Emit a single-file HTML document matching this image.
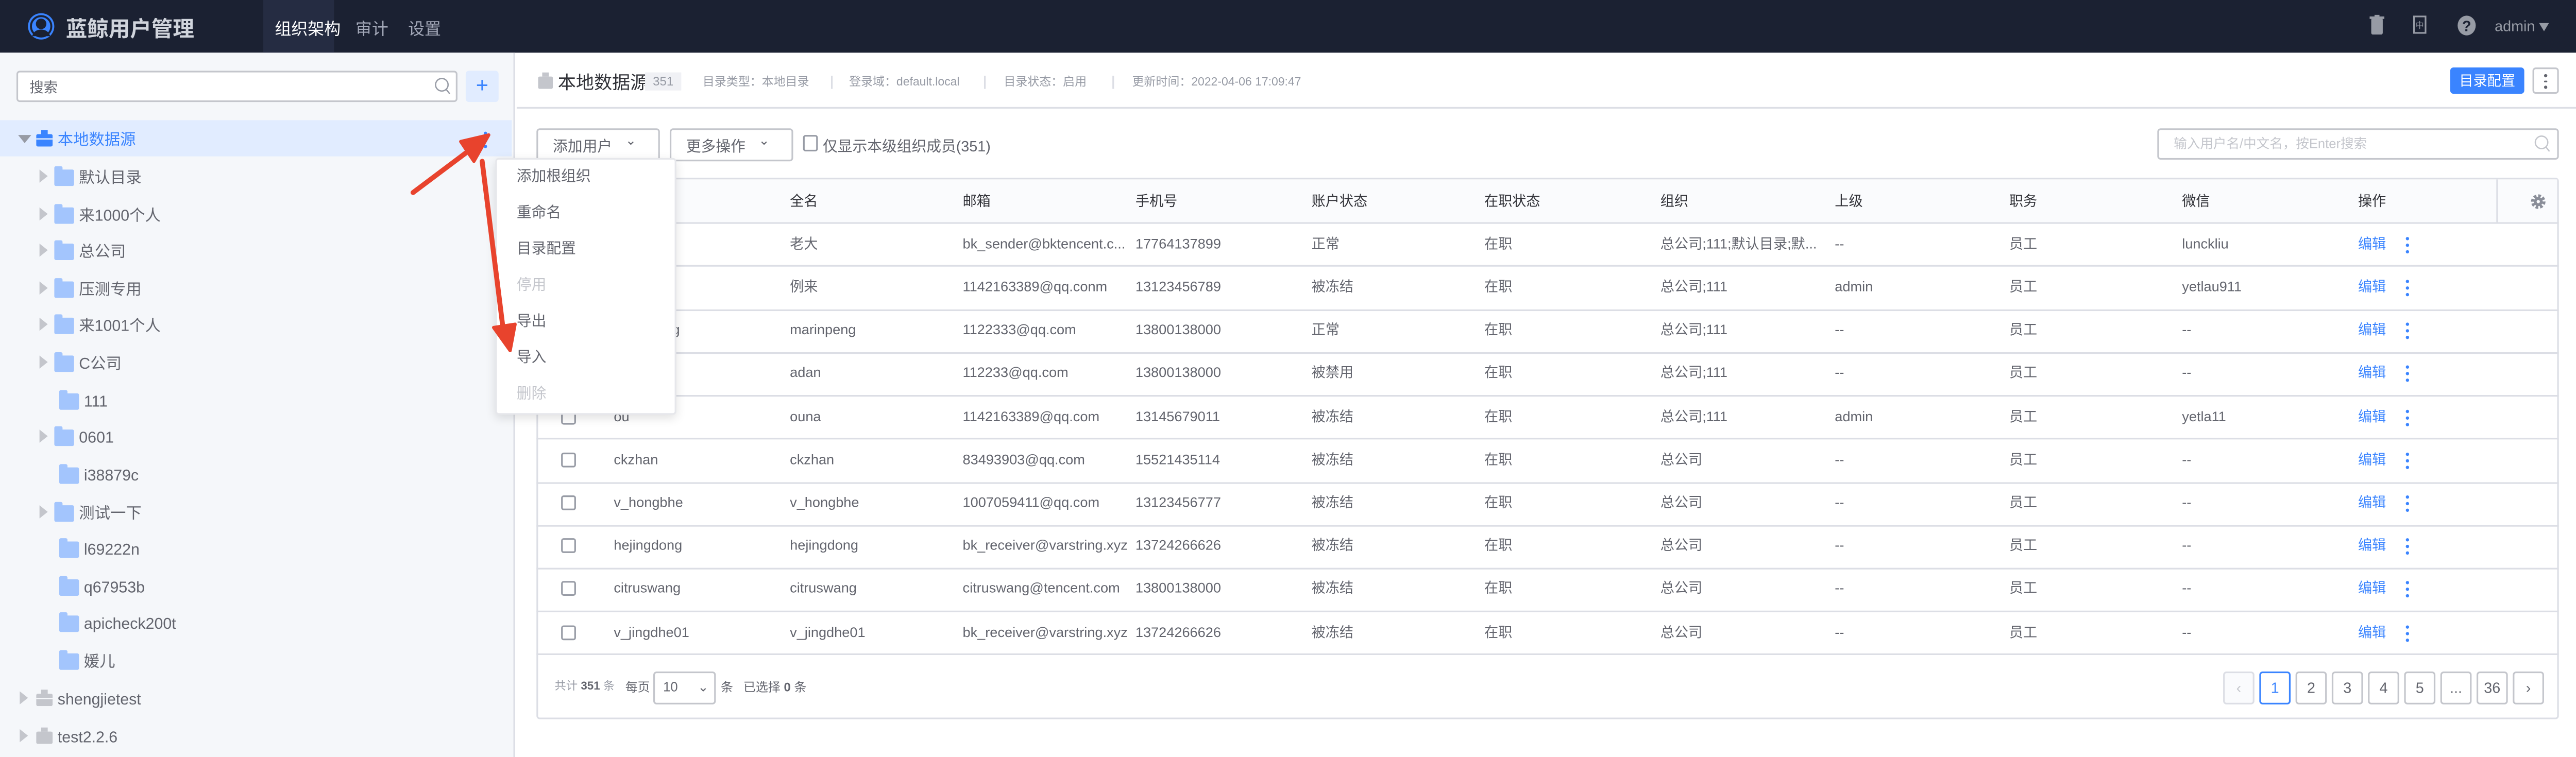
<!DOCTYPE html>
<html><head><meta charset="utf-8">
<style>
*{margin:0;padding:0;box-sizing:border-box}
html,body{width:5118px;height:1470px;overflow:hidden;background:#fff}
#s{position:absolute;left:0;top:0;width:1600px;height:460px;transform:scale(3.194,3.196);transform-origin:0 0;font-family:"Liberation Sans","Noto Sans CJK SC",sans-serif;color:#63656e;font-size:9px;background:#fff}
.a{position:absolute;white-space:nowrap}
.hd{left:0;top:0;width:1600px;height:32px;background:#1b2132}
.sb{left:0;top:32px;width:313px;height:428px;background:#f5f7fa;border-right:1px solid #dcdee5}
.tr{position:absolute;width:0;height:0;border-top:4px solid transparent;border-bottom:4px solid transparent;border-left:5px solid #c4c6cc}
.fd{position:absolute;width:12px;height:10px;background:#a3c5fd;border-radius:1px}
.fd:before{content:"";position:absolute;left:0;top:-2px;width:5px;height:3px;background:#a3c5fd;border-radius:1px 1px 0 0}
.tn{font-size:9.5px;color:#63656e;line-height:18px}
.mi{left:314px;font-size:9px;color:#63656e;line-height:13px}
.th{font-size:8.5px;color:#313238;line-height:12px}
.td{font-size:8.5px;color:#63656e;line-height:12px}
.ln{position:absolute;left:326px;width:1229px;height:1px;background:#dcdee5}
.cb{position:absolute;left:341px;width:9px;height:9px;border:1px solid #979ba5;border-radius:1.5px;background:#fff}
.pg{position:absolute;top:408px;width:19px;height:20px;border:1px solid #c4c6cc;border-radius:2px;text-align:center;line-height:18px;font-size:9px;color:#63656e;background:#fff}
.ed{color:#3a84ff}
.dots{position:absolute;width:2px}
.dots i{display:block;width:2px;height:2px;border-radius:1px;background:#3a84ff;margin-bottom:2px}
.mt{font-size:7.2px;color:#979ba5;line-height:10px;top:45px}
.sp{position:absolute;top:46px;width:1px;height:8px;background:#dcdee5}
</style></head><body><div id="s">
<!-- header -->
<div class="a hd"></div>
<svg class="a" style="left:16px;top:7px" width="18" height="19" viewBox="0 0 18 19"><circle cx="9" cy="9" r="8" fill="#3a84ff"/><circle cx="9" cy="7.5" r="3.2" fill="#1b2132"/><path d="M3.5 15c1-3 3-4 5.5-4s4.5 1 5.5 4z" fill="#1b2132"/><circle cx="9" cy="9" r="6.2" fill="none" stroke="#1b2132" stroke-width="1.2"/></svg>
<div class="a" style="left:40px;top:7px;font-size:13px;color:#d0d4dc;font-weight:bold">蓝鲸用户管理</div>
<div class="a" style="left:160px;top:0;width:43px;height:32px;background:#252c42"></div>
<div class="a" style="left:167px;top:9px;font-size:10px;color:#fff">组织架构</div>
<div class="a" style="left:216px;top:9px;font-size:10px;color:#a3a8b8">审计</div>
<div class="a" style="left:248px;top:9px;font-size:10px;color:#a3a8b8">设置</div>
<svg class="a" style="left:1440px;top:9px" width="9" height="12" viewBox="0 0 9 12"><rect x="1" y="2" width="7" height="10" rx="1" fill="#979ba5"/><rect x="0" y="1" width="9" height="1.5" fill="#979ba5"/><rect x="3" y="0" width="3" height="1.2" fill="#979ba5"/></svg>
<svg class="a" style="left:1466px;top:9px" width="9" height="12" viewBox="0 0 9 12"><rect x="1" y="1" width="7" height="10" fill="none" stroke="#979ba5" stroke-width="1"/><text x="4.5" y="8" font-size="5" fill="#979ba5" text-anchor="middle">中</text></svg>
<svg class="a" style="left:1493px;top:9px" width="12" height="13" viewBox="0 0 12 13"><ellipse cx="6" cy="6.5" rx="5.5" ry="6" fill="#979ba5"/><text x="6" y="10" font-size="9" font-weight="bold" fill="#1b2132" text-anchor="middle">?</text></svg>
<div class="a" style="left:1516px;top:10px;font-size:9px;line-height:12px;color:#979ba5">admin</div>
<div class="a" style="left:1543px;top:14px;border-left:3px solid transparent;border-right:3px solid transparent;border-top:5px solid #979ba5"></div>

<!-- sidebar -->
<div class="a sb"></div>
<div class="a" style="left:10px;top:43px;width:268px;height:19px;background:#fff;border:1px solid #c4c6cc;border-radius:2px"></div>
<div class="a" style="left:18px;top:47px;font-size:8.5px;color:#63656e">搜索</div>
<svg class="a" style="left:264px;top:47px" width="10" height="11" viewBox="0 0 10 11"><circle cx="4.5" cy="4.5" r="3.8" fill="none" stroke="#979ba5" stroke-width="0.8"/><path d="M7.3 7.5l2 2.5" stroke="#979ba5" stroke-width="0.8"/></svg>
<div class="a" style="left:283px;top:43px;width:20px;height:19px;background:#e1ecff;border-radius:2px;color:#3a84ff;font-size:13px;text-align:center;line-height:18px">+</div>

<div class="a" style="left:0;top:73px;width:311px;height:22px;background:#e1ecff"></div>
<div class="a" style="left:11px;top:82px;border-left:4px solid transparent;border-right:4px solid transparent;border-top:5px solid #979ba5"></div>
<svg class="a" style="left:22px;top:79px" width="10" height="10" viewBox="0 0 10 10"><rect x="0" y="2.5" width="10" height="7.5" rx="1" fill="#3a84ff"/><rect x="3" y="0" width="4" height="2.5" fill="#3a84ff"/><rect x="0" y="5" width="10" height="0.8" fill="#e1ecff"/></svg>
<div class="a tn" style="left:35px;top:77px;color:#3a84ff">本地数据源</div>
<div class="dots" style="left:294px;top:80px"><i></i><i></i><i></i></div>

<div class="tr" style="left:24px;top:103px"></div><div class="fd" style="left:33px;top:103px"></div><div class="a tn" style="left:48px;top:100px">默认目录</div>
<div class="tr" style="left:24px;top:126px"></div><div class="fd" style="left:33px;top:126px"></div><div class="a tn" style="left:48px;top:123px">来1000个人</div>
<div class="tr" style="left:24px;top:148px"></div><div class="fd" style="left:33px;top:148px"></div><div class="a tn" style="left:48px;top:145px">总公司</div>
<div class="tr" style="left:24px;top:171px"></div><div class="fd" style="left:33px;top:171px"></div><div class="a tn" style="left:48px;top:168px">压测专用</div>
<div class="tr" style="left:24px;top:193px"></div><div class="fd" style="left:33px;top:193px"></div><div class="a tn" style="left:48px;top:190px">来1001个人</div>
<div class="tr" style="left:24px;top:216px"></div><div class="fd" style="left:33px;top:216px"></div><div class="a tn" style="left:48px;top:213px">C公司</div>
<div class="fd" style="left:36px;top:239px"></div><div class="a tn" style="left:51px;top:236px">111</div>
<div class="tr" style="left:24px;top:261px"></div><div class="fd" style="left:33px;top:261px"></div><div class="a tn" style="left:48px;top:258px">0601</div>
<div class="fd" style="left:36px;top:284px"></div><div class="a tn" style="left:51px;top:281px">i38879c</div>
<div class="tr" style="left:24px;top:307px"></div><div class="fd" style="left:33px;top:307px"></div><div class="a tn" style="left:48px;top:304px">测试一下</div>
<div class="fd" style="left:36px;top:329px"></div><div class="a tn" style="left:51px;top:326px">l69222n</div>
<div class="fd" style="left:36px;top:352px"></div><div class="a tn" style="left:51px;top:349px">q67953b</div>
<div class="fd" style="left:36px;top:374px"></div><div class="a tn" style="left:51px;top:371px">apicheck200t</div>
<div class="fd" style="left:36px;top:397px"></div><div class="a tn" style="left:51px;top:394px">媛儿</div>
<div class="tr" style="left:12px;top:420px"></div>
<svg class="a" style="left:22px;top:419px" width="10" height="10" viewBox="0 0 10 10"><rect x="0" y="2.5" width="10" height="7.5" rx="1" fill="#c4c6cc"/><rect x="3" y="0" width="4" height="2.5" fill="#c4c6cc"/><rect x="0" y="5" width="10" height="0.8" fill="#f5f7fa"/></svg>
<div class="a tn" style="left:35px;top:417px">shengjietest</div>
<div class="tr" style="left:12px;top:443px"></div>
<svg class="a" style="left:22px;top:442px" width="10" height="10" viewBox="0 0 10 10"><rect x="0" y="2.5" width="10" height="7.5" rx="1" fill="#c4c6cc"/><rect x="3" y="0" width="4" height="2.5" fill="#c4c6cc"/></svg>
<div class="a tn" style="left:35px;top:440px">test2.2.6</div>

<!-- main header -->
<svg class="a" style="left:327px;top:44px" width="9" height="10" viewBox="0 0 9 10"><rect x="0" y="2.5" width="9" height="7.5" rx="1" fill="#c4c6cc"/><rect x="2.5" y="0" width="4" height="2.5" fill="#c4c6cc"/></svg>
<div class="a" style="left:339px;top:42px;font-size:11px;color:#313238">本地数据源</div>
<div class="a" style="left:392px;top:44px;width:22px;height:11px;background:#f0f1f5;font-size:7.5px;color:#979ba5;text-align:center;line-height:11px">351</div>
<div class="a mt" style="left:427px">目录类型：本地目录</div>
<div class="sp" style="left:505px"></div>
<div class="a mt" style="left:516px">登录域：default.local</div>
<div class="sp" style="left:598px"></div>
<div class="a mt" style="left:610px">目录状态：启用</div>
<div class="sp" style="left:676px"></div>
<div class="a mt" style="left:688px">更新时间：2022-04-06 17:09:47</div>
<div class="a" style="left:1489px;top:41px;width:45px;height:16px;background:#3a84ff;border-radius:2px;color:#fff;font-size:8.5px;text-align:center;line-height:16px">目录配置</div>
<div class="a" style="left:1539px;top:41px;width:16px;height:16px;border:1px solid #c4c6cc;border-radius:2px;background:#fff"></div>
<div class="dots" style="left:1546px;top:45px"><i style="background:#63656e;width:1.5px;height:1.5px"></i><i style="background:#63656e;width:1.5px;height:1.5px"></i><i style="background:#63656e;width:1.5px;height:1.5px"></i></div>
<div class="a" style="left:314px;top:65px;width:1286px;height:1px;background:#dcdee5"></div>

<!-- toolbar -->
<div class="a" style="left:326px;top:78px;width:75px;height:20px;border:1px solid #c4c6cc;border-radius:2px;background:#fff"></div>
<div class="a" style="left:336px;top:82px;font-size:9px;color:#63656e">添加用户</div>
<div class="a" style="left:380px;top:81px;font-size:8px;color:#63656e">⌄</div>
<div class="a" style="left:407px;top:78px;width:75px;height:20px;border:1px solid #c4c6cc;border-radius:2px;background:#fff"></div>
<div class="a" style="left:417px;top:82px;font-size:9px;color:#63656e">更多操作</div>
<div class="a" style="left:461px;top:81px;font-size:8px;color:#63656e">⌄</div>
<div class="a" style="left:488px;top:82px;width:9px;height:10px;border:1px solid #979ba5;border-radius:1.5px"></div>
<div class="a" style="left:500px;top:82px;font-size:9px;color:#63656e">仅显示本级组织成员(351)</div>
<div class="a" style="left:1311px;top:78px;width:244px;height:19px;border:1px solid #c4c6cc;border-radius:2px;background:#fff"></div>
<div class="a" style="left:1321px;top:82px;font-size:8px;color:#c4c6cc">输入用户名/中文名，按Enter搜索</div>
<svg class="a" style="left:1540px;top:82px" width="10" height="11" viewBox="0 0 10 11"><circle cx="4.5" cy="4.5" r="3.8" fill="none" stroke="#c4c6cc" stroke-width="0.8"/><path d="M7.3 7.5l2 2.5" stroke="#c4c6cc" stroke-width="0.8"/></svg>

<!-- table -->
<div class="a" style="left:326px;top:108px;width:1229px;height:329px;border:1px solid #dcdee5;border-radius:2px"></div>
<div class="a" style="left:327px;top:109px;width:1227px;height:26px;background:#fafbfd"></div>
<div class="a" style="left:1517px;top:109px;width:1px;height:26px;background:#dcdee5"></div>
<svg class="a" style="left:1538px;top:118px" width="9" height="9" viewBox="0 0 10 10"><circle cx="5" cy="5" r="3.6" fill="none" stroke="#8a8e99" stroke-width="2.6" stroke-dasharray="1.7 1.1"/><circle cx="5" cy="5" r="3" fill="#8a8e99"/><circle cx="5" cy="5" r="1.1" fill="#fafbfd"/></svg>
<div class="ln" style="top:135px"></div>
<div class="a th" style="left:373px;top:116px">用户名</div><div class="a th" style="left:480px;top:116px">全名</div><div class="a th" style="left:585px;top:116px">邮箱</div><div class="a th" style="left:690px;top:116px">手机号</div><div class="a th" style="left:797px;top:116px">账户状态</div><div class="a th" style="left:902px;top:116px">在职状态</div><div class="a th" style="left:1009px;top:116px">组织</div><div class="a th" style="left:1115px;top:116px">上级</div><div class="a th" style="left:1221px;top:116px">职务</div><div class="a th" style="left:1326px;top:116px">微信</div><div class="a th" style="left:1433px;top:116px">操作</div>

<div class="ln" style="top:161px"></div><div class="ln" style="top:188px"></div><div class="ln" style="top:214px"></div><div class="ln" style="top:240px"></div><div class="ln" style="top:266px"></div><div class="ln" style="top:293px"></div><div class="ln" style="top:319px"></div><div class="ln" style="top:345px"></div><div class="ln" style="top:371px"></div><div class="ln" style="top:397px"></div>

<div class="cb" style="top:144px"></div><div class="a td" style="left:373px;top:142px">laoda</div><div class="a td" style="left:480px;top:142px">老大</div><div class="a td" style="left:585px;top:142px">bk_sender@bktencent.c...</div><div class="a td" style="left:690px;top:142px">17764137899</div><div class="a td" style="left:797px;top:142px">正常</div><div class="a td" style="left:902px;top:142px">在职</div><div class="a td" style="left:1009px;top:142px">总公司;111;默认目录;默...</div><div class="a td" style="left:1115px;top:142px">--</div><div class="a td" style="left:1221px;top:142px">员工</div><div class="a td" style="left:1326px;top:142px">lunckliu</div><div class="a td ed" style="left:1433px;top:142px">编辑</div><div class="dots" style="left:1462px;top:144px"><i></i><i></i><i></i></div>

<div class="cb" style="top:170px"></div><div class="a td" style="left:373px;top:168px">lilai</div><div class="a td" style="left:480px;top:168px">例来</div><div class="a td" style="left:585px;top:168px">1142163389@qq.conm</div><div class="a td" style="left:690px;top:168px">13123456789</div><div class="a td" style="left:797px;top:168px">被冻结</div><div class="a td" style="left:902px;top:168px">在职</div><div class="a td" style="left:1009px;top:168px">总公司;111</div><div class="a td" style="left:1115px;top:168px">admin</div><div class="a td" style="left:1221px;top:168px">员工</div><div class="a td" style="left:1326px;top:168px">yetlau911</div><div class="a td ed" style="left:1433px;top:168px">编辑</div><div class="dots" style="left:1462px;top:170px"><i></i><i></i><i></i></div>

<div class="cb" style="top:196px"></div><div class="a td" style="left:373px;top:194px">marinpeng</div><div class="a td" style="left:480px;top:194px">marinpeng</div><div class="a td" style="left:585px;top:194px">1122333@qq.com</div><div class="a td" style="left:690px;top:194px">13800138000</div><div class="a td" style="left:797px;top:194px">正常</div><div class="a td" style="left:902px;top:194px">在职</div><div class="a td" style="left:1009px;top:194px">总公司;111</div><div class="a td" style="left:1115px;top:194px">--</div><div class="a td" style="left:1221px;top:194px">员工</div><div class="a td" style="left:1326px;top:194px">--</div><div class="a td ed" style="left:1433px;top:194px">编辑</div><div class="dots" style="left:1462px;top:196px"><i></i><i></i><i></i></div>

<div class="cb" style="top:222px"></div><div class="a td" style="left:373px;top:220px">adan</div><div class="a td" style="left:480px;top:220px">adan</div><div class="a td" style="left:585px;top:220px">112233@qq.com</div><div class="a td" style="left:690px;top:220px">13800138000</div><div class="a td" style="left:797px;top:220px">被禁用</div><div class="a td" style="left:902px;top:220px">在职</div><div class="a td" style="left:1009px;top:220px">总公司;111</div><div class="a td" style="left:1115px;top:220px">--</div><div class="a td" style="left:1221px;top:220px">员工</div><div class="a td" style="left:1326px;top:220px">--</div><div class="a td ed" style="left:1433px;top:220px">编辑</div><div class="dots" style="left:1462px;top:222px"><i></i><i></i><i></i></div>

<div class="cb" style="top:249px"></div><div class="a td" style="left:373px;top:247px">ou</div><div class="a td" style="left:480px;top:247px">ouna</div><div class="a td" style="left:585px;top:247px">1142163389@qq.com</div><div class="a td" style="left:690px;top:247px">13145679011</div><div class="a td" style="left:797px;top:247px">被冻结</div><div class="a td" style="left:902px;top:247px">在职</div><div class="a td" style="left:1009px;top:247px">总公司;111</div><div class="a td" style="left:1115px;top:247px">admin</div><div class="a td" style="left:1221px;top:247px">员工</div><div class="a td" style="left:1326px;top:247px">yetla11</div><div class="a td ed" style="left:1433px;top:247px">编辑</div><div class="dots" style="left:1462px;top:249px"><i></i><i></i><i></i></div>

<div class="cb" style="top:275px"></div><div class="a td" style="left:373px;top:273px">ckzhan</div><div class="a td" style="left:480px;top:273px">ckzhan</div><div class="a td" style="left:585px;top:273px">83493903@qq.com</div><div class="a td" style="left:690px;top:273px">15521435114</div><div class="a td" style="left:797px;top:273px">被冻结</div><div class="a td" style="left:902px;top:273px">在职</div><div class="a td" style="left:1009px;top:273px">总公司</div><div class="a td" style="left:1115px;top:273px">--</div><div class="a td" style="left:1221px;top:273px">员工</div><div class="a td" style="left:1326px;top:273px">--</div><div class="a td ed" style="left:1433px;top:273px">编辑</div><div class="dots" style="left:1462px;top:275px"><i></i><i></i><i></i></div>

<div class="cb" style="top:301px"></div><div class="a td" style="left:373px;top:299px">v_hongbhe</div><div class="a td" style="left:480px;top:299px">v_hongbhe</div><div class="a td" style="left:585px;top:299px">1007059411@qq.com</div><div class="a td" style="left:690px;top:299px">13123456777</div><div class="a td" style="left:797px;top:299px">被冻结</div><div class="a td" style="left:902px;top:299px">在职</div><div class="a td" style="left:1009px;top:299px">总公司</div><div class="a td" style="left:1115px;top:299px">--</div><div class="a td" style="left:1221px;top:299px">员工</div><div class="a td" style="left:1326px;top:299px">--</div><div class="a td ed" style="left:1433px;top:299px">编辑</div><div class="dots" style="left:1462px;top:301px"><i></i><i></i><i></i></div>

<div class="cb" style="top:327px"></div><div class="a td" style="left:373px;top:325px">hejingdong</div><div class="a td" style="left:480px;top:325px">hejingdong</div><div class="a td" style="left:585px;top:325px">bk_receiver@varstring.xyz</div><div class="a td" style="left:690px;top:325px">13724266626</div><div class="a td" style="left:797px;top:325px">被冻结</div><div class="a td" style="left:902px;top:325px">在职</div><div class="a td" style="left:1009px;top:325px">总公司</div><div class="a td" style="left:1115px;top:325px">--</div><div class="a td" style="left:1221px;top:325px">员工</div><div class="a td" style="left:1326px;top:325px">--</div><div class="a td ed" style="left:1433px;top:325px">编辑</div><div class="dots" style="left:1462px;top:327px"><i></i><i></i><i></i></div>

<div class="cb" style="top:353px"></div><div class="a td" style="left:373px;top:351px">citruswang</div><div class="a td" style="left:480px;top:351px">citruswang</div><div class="a td" style="left:585px;top:351px">citruswang@tencent.com</div><div class="a td" style="left:690px;top:351px">13800138000</div><div class="a td" style="left:797px;top:351px">被冻结</div><div class="a td" style="left:902px;top:351px">在职</div><div class="a td" style="left:1009px;top:351px">总公司</div><div class="a td" style="left:1115px;top:351px">--</div><div class="a td" style="left:1221px;top:351px">员工</div><div class="a td" style="left:1326px;top:351px">--</div><div class="a td ed" style="left:1433px;top:351px">编辑</div><div class="dots" style="left:1462px;top:353px"><i></i><i></i><i></i></div>

<div class="cb" style="top:380px"></div><div class="a td" style="left:373px;top:378px">v_jingdhe01</div><div class="a td" style="left:480px;top:378px">v_jingdhe01</div><div class="a td" style="left:585px;top:378px">bk_receiver@varstring.xyz</div><div class="a td" style="left:690px;top:378px">13724266626</div><div class="a td" style="left:797px;top:378px">被冻结</div><div class="a td" style="left:902px;top:378px">在职</div><div class="a td" style="left:1009px;top:378px">总公司</div><div class="a td" style="left:1115px;top:378px">--</div><div class="a td" style="left:1221px;top:378px">员工</div><div class="a td" style="left:1326px;top:378px">--</div><div class="a td ed" style="left:1433px;top:378px">编辑</div><div class="dots" style="left:1462px;top:380px"><i></i><i></i><i></i></div>

<!-- pagination -->
<div class="a" style="left:337px;top:412px;font-size:7px;line-height:11px;color:#979ba5">共计 <b style="color:#63656e">351</b> 条</div>
<div class="a" style="left:380px;top:412px;font-size:7.5px;line-height:11px;color:#63656e">每页</div>
<div class="a" style="left:397px;top:408px;width:38px;height:20px;border:1px solid #c4c6cc;border-radius:2px;background:#fff;font-size:8px;line-height:18px;padding-left:5px">10<span style="position:absolute;left:26px;top:0">⌄</span></div>
<div class="a" style="left:438px;top:412px;font-size:7.5px;line-height:11px;color:#63656e">条 &nbsp; 已选择 <b>0</b> 条</div>
<div class="pg" style="left:1351px;background:#fafbfd;border-color:#dcdee5;color:#c4c6cc">‹</div>
<div class="pg" style="left:1373px;border-color:#3a84ff;color:#3a84ff">1</div>
<div class="pg" style="left:1395px">2</div>
<div class="pg" style="left:1417px">3</div>
<div class="pg" style="left:1439px">4</div>
<div class="pg" style="left:1461px">5</div>
<div class="pg" style="left:1483px">...</div>
<div class="pg" style="left:1505px">36</div>
<div class="pg" style="left:1527px">›</div>

<!-- context menu -->
<div class="a" style="left:301px;top:96px;width:110px;height:156px;background:#fff;border:1px solid #e6e7eb;border-radius:2px;box-shadow:0 2px 6px rgba(0,0,0,.12)"></div>
<div class="a mi" style="top:101px">添加根组织</div>
<div class="a mi" style="top:123px">重命名</div>
<div class="a mi" style="top:145px">目录配置</div>
<div class="a mi" style="top:167px;color:#c4c6cc">停用</div>
<div class="a mi" style="top:189px">导出</div>
<div class="a mi" style="top:211px">导入</div>
<div class="a mi" style="top:233px;color:#c4c6cc">删除</div>

<!-- red arrows -->
<svg class="a" style="left:0;top:0" width="1600" height="460" viewBox="0 0 1600 460">
<path d="M251 117 L287 90" stroke="#e8432d" stroke-width="3" stroke-linecap="round"/>
<path d="M297 82 L280 86 L288 98 Z" fill="#e8432d" stroke="#e8432d" stroke-width="2" stroke-linejoin="round"/>
<path d="M293 98 L306 202" stroke="#e8432d" stroke-width="3" stroke-linecap="round"/>
<path d="M310 213 L300 199 L313 197 Z" fill="#e8432d" stroke="#e8432d" stroke-width="2" stroke-linejoin="round"/>
</svg>
</div></body></html>
